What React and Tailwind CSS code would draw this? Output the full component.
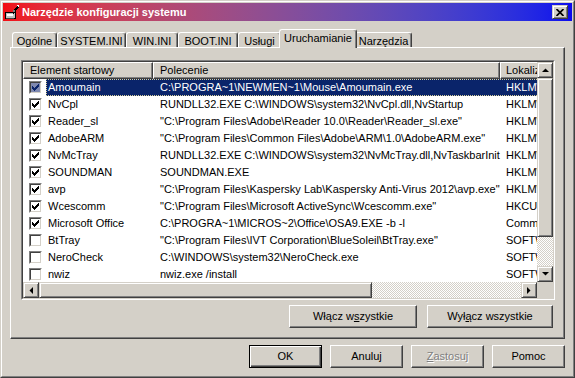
import React from 'react';

const raised = 'border border-t-white border-l-white border-r-[#404040] border-b-[#404040] shadow-[inset_-1px_-1px_#808080]';
const sbBtn = 'border border-t-[#d4d0c8] border-l-[#d4d0c8] border-r-[#404040] border-b-[#404040] shadow-[inset_1px_1px_#fff,inset_-1px_-1px_#808080] bg-[#d4d0c8]';
const dither = 'bg-[image:repeating-conic-gradient(#ffffff_0_25%,#d4d0c8_0_50%)] bg-[length:2px_2px]';

const RUN = 'HKLM\\SOFTWARE\\Microsoft\\Windows\\CurrentVersion\\Run';

const rows = [
    { name: 'Amoumain', cmd: 'C:\\PROGRA~1\\NEWMEN~1\\Mouse\\Amoumain.exe', loc: RUN, on: true, sel: true },
    { name: 'NvCpl', cmd: 'RUNDLL32.EXE C:\\WINDOWS\\system32\\NvCpl.dll,NvStartup', loc: RUN, on: true },
    { name: 'Reader_sl', cmd: '"C:\\Program Files\\Adobe\\Reader 10.0\\Reader\\Reader_sl.exe"', loc: RUN, on: true },
    { name: 'AdobeARM', cmd: '"C:\\Program Files\\Common Files\\Adobe\\ARM\\1.0\\AdobeARM.exe"', loc: RUN, on: true },
    { name: 'NvMcTray', cmd: 'RUNDLL32.EXE C:\\WINDOWS\\system32\\NvMcTray.dll,NvTaskbarInit', loc: RUN, on: true },
    { name: 'SOUNDMAN', cmd: 'SOUNDMAN.EXE', loc: RUN, on: true },
    { name: 'avp', cmd: '"C:\\Program Files\\Kaspersky Lab\\Kaspersky Anti-Virus 2012\\avp.exe"', loc: RUN, on: true },
    { name: 'Wcescomm', cmd: '"C:\\Program Files\\Microsoft ActiveSync\\Wcescomm.exe"', loc: 'HKCU\\SOFTWARE\\Microsoft\\Windows\\CurrentVersion\\Run', on: true },
    { name: 'Microsoft Office', cmd: 'C:\\PROGRA~1\\MICROS~2\\Office\\OSA9.EXE -b -l', loc: 'Common Startup', on: true },
    { name: 'BtTray', cmd: '"C:\\Program Files\\IVT Corporation\\BlueSoleil\\BtTray.exe"', loc: 'SOFTWARE\\Microsoft\\Shared Tools\\MSConfig\\startupreg\\BtTray', on: false },
    { name: 'NeroCheck', cmd: 'C:\\WINDOWS\\system32\\NeroCheck.exe', loc: 'SOFTWARE\\Microsoft\\Shared Tools\\MSConfig\\startupreg\\NeroCheck', on: false },
    { name: 'nwiz', cmd: 'nwiz.exe /install', loc: 'SOFTWARE\\Microsoft\\Shared Tools\\MSConfig\\startupreg\\nwiz', on: false },
];

const tabs = [
    { label: 'Ogólne', w: 'w-[45px]' },
    { label: 'SYSTEM.INI', w: 'w-[69px]' },
    { label: 'WIN.INI', w: 'w-[52px]' },
    { label: 'BOOT.INI', w: 'w-[60px]' },
    { label: 'Usługi', w: 'w-[43px]' },
    { label: 'Uruchamianie', w: 'w-[78px]', active: true },
    { label: 'Narzędzia', w: 'w-[57px]' },
];

const Check = ({ color }) => (
    <svg width="7" height="7" viewBox="0 0 7 7" shapeRendering="crispEdges">
        {[2, 3, 4, 3, 2, 1, 0].map((y, x) => (
            <rect key={x} x={x} y={y} width="1" height="3" fill={color} />
        ))}
    </svg>
);

const Checkbox = ({ checked, selected }) => (
    <div className="w-[13px] h-[13px] shrink-0 border border-t-[#808080] border-l-[#808080] border-r-white border-b-white">
        <div className={`w-full h-full border border-t-[#404040] border-l-[#404040] border-r-[#d4d0c8] border-b-[#d4d0c8] flex items-center justify-center ${selected ? 'bg-[#7f89b0]' : 'bg-white'}`}>
            {checked && <Check color={selected ? '#0a246a' : '#000000'} />}
        </div>
    </div>
);

const Arrow = ({ dir }) => {
    const shapes = {
        up: { w: 7, h: 4, pts: '0,4 3.5,0.5 7,4' },
        down: { w: 7, h: 4, pts: '0,0 7,0 3.5,3.5' },
        left: { w: 4, h: 7, pts: '4,0 4,7 0.5,3.5' },
        right: { w: 4, h: 7, pts: '0,0 3.5,3.5 0,7' },
    };
    const s = shapes[dir];
    return (
        <svg width={s.w} height={s.h} viewBox={`0 0 ${s.w} ${s.h}`}>
            <polygon points={s.pts} fill="#000" />
        </svg>
    );
};

const ScrollBtn = ({ dir }) => (
    <div className={`w-[16px] h-[16px] shrink-0 flex items-center justify-center ${sbBtn}`}>
        <Arrow dir={dir} />
    </div>
);

const TitleIcon = () => (
    <svg width="16" height="16" viewBox="0 0 16 16" shapeRendering="crispEdges">
        <rect x="1" y="8" width="10" height="6" fill="#c0c0c0" stroke="#000" />
        <rect x="3" y="10" width="6" height="2" fill="#ffffff" />
        <rect x="2" y="14" width="8" height="1" fill="#404040" />
        <path d="M8 9 L13 2 L15 3 L10 10 Z" fill="#000" />
        <path d="M12 1 L15 1 L15 3 Z" fill="#ffffff" />
        <rect x="9" y="6" width="2" height="2" fill="#808080" />
    </svg>
);

const Btn = ({ className = '', children, isDefault }) => (
    <div
        className={`h-[23px] flex items-center justify-center bg-[#d4d0c8] ${isDefault
            ? 'border border-black shadow-[inset_1px_1px_#fff,inset_-1px_-1px_#404040,inset_-2px_-2px_#808080]'
            : raised} ${className}`}
    >
        {children}
    </div>
);

export default function App() {
    return (
        <div className="w-[575px] h-[378px] bg-[#d4d0c8] font-['Liberation_Sans',Arial,sans-serif] text-[11px] leading-none text-black select-none">
            <div className="w-full h-full border border-t-[#d4d0c8] border-l-[#d4d0c8] border-r-[#404040] border-b-[#404040]">
                <div className="w-full h-full border border-t-white border-l-white border-r-[#808080] border-b-[#808080] p-px flex flex-col">
                    {/* Title bar */}
                    <div className="h-[18px] shrink-0 flex items-center pl-px pr-[4px] bg-linear-to-r from-[#f20c12] to-[#0c08ee]">
                        <TitleIcon />
                        <span className="ml-[2px] text-white font-bold">Narzędzie konfiguracji systemu</span>
                        <div className={`ml-auto w-[16px] h-[14px] flex items-center justify-center ${sbBtn}`}>
                            <svg width="8" height="7" viewBox="0 0 8 7">
                                <path d="M0.5 0 L7.5 7 M7.5 0 L0.5 7" stroke="#000" strokeWidth="1.7" />
                            </svg>
                        </div>
                    </div>

                    {/* Tabs */}
                    <div className="h-[26px] shrink-0 flex items-end pl-[9px]">
                        {tabs.map((t) =>
                            t.active ? (
                                <div
                                    key={t.label}
                                    className={`${t.w} relative z-10 -mx-[2px] -mb-px h-[19px] bg-[#d4d0c8] flex justify-center pt-[3px] border-t border-l border-r border-t-white border-l-white border-r-[#404040] shadow-[inset_-1px_0_#808080] rounded-t-[3px]`}
                                >
                                    {t.label}
                                </div>
                            ) : (
                                <div
                                    key={t.label}
                                    className={`${t.w} h-[15px] flex justify-center pt-[3px] border-t border-l border-r border-t-white border-l-white border-r-[#404040] shadow-[inset_-1px_0_#808080] rounded-t-[3px]`}
                                >
                                    {t.label}
                                </div>
                            )
                        )}
                    </div>

                    {/* Tab panel */}
                    <div className={`mx-[7px] h-[292px] shrink-0 pt-[12px] pl-[10px] pr-[11px] flex flex-col ${raised} border-t-white`}>
                        {/* List view */}
                        <div className="w-[534px] h-[240px] border border-t-[#808080] border-l-[#808080] border-r-white border-b-white">
                            <div className="w-full h-full border border-t-[#404040] border-l-[#404040] border-r-[#d4d0c8] border-b-[#d4d0c8] bg-white flex flex-col">
                                <div className="flex h-[220px]">
                                    <div className="w-[514px] flex flex-col overflow-hidden">
                                        <div className="h-[17px] shrink-0 flex whitespace-nowrap">
                                            <div className={`w-[130px] shrink-0 bg-[#d4d0c8] flex items-center pl-[6px] ${raised}`}>Element startowy</div>
                                            <div className={`w-[347px] shrink-0 bg-[#d4d0c8] flex items-center pl-[6px] ${raised}`}>Polecenie</div>
                                            <div className={`w-[200px] shrink-0 bg-[#d4d0c8] flex items-center pl-[5px] ${raised}`}>Lokalizacja</div>
                                        </div>
                                        <div className="h-[203px] overflow-hidden">
                                            {rows.map((r) => (
                                                <div key={r.name} className="h-[17px] flex whitespace-nowrap">
                                                    <div className="w-[23px] shrink-0 flex items-center justify-end pr-[4px]">
                                                        <Checkbox checked={r.on} selected={r.sel} />
                                                    </div>
                                                    <div
                                                        className={`flex shrink-0 border ${r.sel
                                                            ? 'border-dotted border-[#d8cf9a] bg-[#0a246a] text-white'
                                                            : 'border-transparent'}`}
                                                    >
                                                        <div className="w-[106px] shrink-0 flex items-center pl-px">{r.name}</div>
                                                        <div className="w-[347px] shrink-0 flex items-center pl-[7px]">{r.cmd}</div>
                                                        <div className="w-[300px] shrink-0 flex items-center pl-[6px]">{r.loc}</div>
                                                    </div>
                                                </div>
                                            ))}
                                        </div>
                                    </div>
                                    {/* Vertical scrollbar */}
                                    <div className="w-[16px] flex flex-col">
                                        <ScrollBtn dir="up" />
                                        <div className={`h-[159px] shrink-0 ${sbBtn}`} />
                                        <div className={`flex-1 ${dither}`} />
                                        <ScrollBtn dir="down" />
                                    </div>
                                </div>
                                {/* Horizontal scrollbar */}
                                <div className="flex h-[16px]">
                                    <div className="w-[514px] flex">
                                        <ScrollBtn dir="left" />
                                        <div className={`w-[333px] shrink-0 ${sbBtn}`} />
                                        <div className={`flex-1 ${dither}`} />
                                        <ScrollBtn dir="right" />
                                    </div>
                                    <div className="w-[16px] bg-[#d4d0c8]" />
                                </div>
                            </div>
                        </div>

                        <div className="mt-[5px] flex justify-end gap-[10px]">
                            <Btn className="w-[128px] h-[22px]">
                                Włącz w<u>s</u>zystkie
                            </Btn>
                            <Btn className="w-[126px] h-[22px]">
                                Wył<u>ą</u>cz wszystkie
                            </Btn>
                        </div>
                    </div>

                    {/* Dialog buttons */}
                    <div className="mt-[6px] flex justify-end gap-[8px] pr-[7px]">
                        <Btn className="w-[73px]" isDefault>OK</Btn>
                        <Btn className="w-[73px]">Anuluj</Btn>
                        <Btn className="w-[73px] text-[#808080] [text-shadow:1px_1px_#fff]">
                            <u>Z</u>astosuj
                        </Btn>
                        <Btn className="w-[73px]">Pomoc</Btn>
                    </div>
                </div>
            </div>
        </div>
    );
}
